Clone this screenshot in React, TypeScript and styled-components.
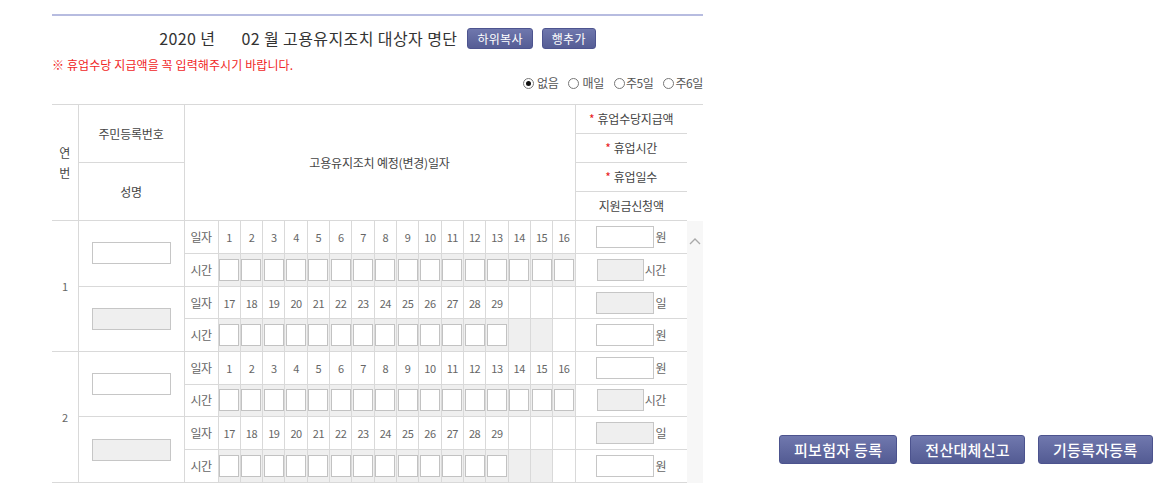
import React from 'react';
import styled, { createGlobalStyle } from 'styled-components';

const GlobalStyle = createGlobalStyle`
  html, body {
    margin: 0;
    padding: 0;
    background: #fff;
  }
  body {
    font-family: "Noto Sans CJK KR", "Noto Sans", sans-serif;
    color: #444;
  }
`;

const LINE = '#d9d9d9';

const Page = styled.div`
  display: flex;
  align-items: flex-end;
  gap: 76px;
  padding: 14px 0 0 52px;
`;

const Panel = styled.div`
  flex: none;
  width: 651px;
  border-top: 2px solid #b7bce0;
`;

const TitleRow = styled.div`
  display: flex;
  justify-content: center;
  align-items: center;
  height: 21px;
  margin-top: 12px;
`;

const TitleText = styled.span<{ $ml?: number }>`
  font-size: 16px;
  line-height: 21px;
  color: #333;
  letter-spacing: 0.4px;
  margin-left: ${({ $ml }) => $ml || 0}px;
`;

const ButtonGroup = styled.div`
  display: flex;
  gap: 9px;
  margin-left: 10px;
`;

const SmallButton = styled.button`
  height: 21px;
  padding: 0 9px;
  font-family: inherit;
  font-size: 12px;
  line-height: 19px;
  color: #fff;
  letter-spacing: 0.3px;
  background: linear-gradient(#6f77ad, #555d95);
  border: 1px solid #4d548f;
  border-radius: 3px;
  cursor: pointer;
`;

const Notice = styled.p`
  margin: 8px 0 0;
  font-size: 12px;
  line-height: 16px;
  letter-spacing: 0.1px;
  color: #f02626;
`;

const RadioRow = styled.div`
  display: flex;
  justify-content: flex-end;
  gap: 10px;
  margin-top: 2px;
  font-size: 12px;
  line-height: 16px;
  color: #555;
  letter-spacing: -0.4px;
`;

const RadioItem = styled.label`
  display: flex;
  align-items: center;
  gap: 1px;
`;

const RadioLabel = styled.span`
  white-space: pre;
`;

const RadioDot = styled.span<{ $checked?: boolean }>`
  position: relative;
  width: 11px;
  height: 11px;
  box-sizing: border-box;
  border: 1px solid #777;
  border-radius: 50%;
  background: #fff;
  &::after {
    content: '';
    display: ${({ $checked }) => ($checked ? 'block' : 'none')};
    position: absolute;
    left: 2px;
    top: 2px;
    width: 5px;
    height: 5px;
    border-radius: 50%;
    background: #111;
  }
`;

const Grid = styled.div`
  margin-top: 13px;
  border-top: 1px solid ${LINE};
`;

const HeadBox = styled.div`
  width: 635px;
  border-bottom: 1px solid ${LINE};
`;

const BodyWrap = styled.div`
  display: flex;
  height: 262px;
  overflow: hidden;
`;

const BodyBox = styled.div`
  width: 635px;
  border-bottom: 1px solid ${LINE};
`;

const ScrollTrack = styled.div`
  width: 16px;
  background: #f7f7f7;
  display: flex;
  justify-content: center;
  align-items: flex-start;
  padding-top: 17px;
  box-sizing: border-box;
`;

const Table = styled.table`
  width: 635px;
  table-layout: fixed;
  border-collapse: collapse;
  border-style: hidden;
`;

const Col = styled.col<{ $w: number }>`
  width: ${({ $w }) => $w}px;
`;

const HeadRow = styled.tr`
  height: 28.75px;
`;

const BodyRow = styled.tr`
  height: 32.625px;
`;

const HeadCell = styled.th`
  border: 1px solid ${LINE};
  padding: 0;
  font-size: 12px;
  line-height: 20px;
  font-weight: normal;
  color: #444;
  letter-spacing: -0.2px;
  text-align: center;
  vertical-align: middle;
`;

const Star = styled.span`
  color: #e82020;
  margin-right: 3px;
`;

const Cell = styled.td<{ $bg?: string; $size?: number; $color?: string }>`
  border: 1px solid ${LINE};
  padding: 0;
  font-size: ${({ $size }) => $size || 12}px;
  line-height: 16px;
  color: ${({ $color }) => $color || '#666'};
  background: ${({ $bg }) => $bg || '#fff'};
  letter-spacing: -0.5px;
  text-align: center;
  vertical-align: middle;
  white-space: nowrap;
`;

const Field = styled.input<{ $w: number; $gray?: boolean }>`
  display: inline-block;
  vertical-align: middle;
  box-sizing: border-box;
  width: ${({ $w }) => $w}px;
  height: 22px;
  margin: 0;
  padding: 0 3px;
  border: 1px solid #c6c6c6;
  background: ${({ $gray }) => ($gray ? '#efefef' : '#fff')};
  font-family: inherit;
  font-size: 12px;
  outline: none;
`;

const TimeField = styled.input`
  display: block;
  box-sizing: border-box;
  width: 20px;
  height: 22px;
  margin: 0 auto;
  padding: 0;
  border: 1px solid #c2c2c2;
  background: #fff;
  outline: none;
`;

const Unit = styled.span`
  display: inline-block;
  vertical-align: middle;
  margin-left: 1px;
  font-size: 12px;
  color: #666;
`;

const ActionBar = styled.div`
  flex: none;
  display: flex;
  gap: 13px;
  margin-bottom: 19px;
`;

const ActionButton = styled.button`
  flex: none;
  height: 29px;
  padding: 0 14px;
  font-family: inherit;
  font-size: 15px;
  font-weight: 500;
  letter-spacing: 0.3px;
  line-height: 27px;
  white-space: nowrap;
  color: #fff;
  background: linear-gradient(#7078ae, #535b93);
  border: 1px solid #4c538e;
  border-radius: 3px;
  cursor: pointer;
`;

const GRAY = '#efefef';
const dayCols = Array.from({ length: 16 }, (_, i) => i);

const ChevronUp = () => (
  <svg width="12" height="7" viewBox="0 0 12 7">
    <polyline points="1,6 6,1 11,6" fill="none" stroke="#a9a9a9" strokeWidth="1.3" />
  </svg>
);

const Block: React.FC<{ no: number }> = ({ no }) => (
  <>
    <BodyRow>
      <Cell rowSpan={4} $size={11}>{no}</Cell>
      <Cell rowSpan={2}><Field $w={79} /></Cell>
      <Cell>일자</Cell>
      {dayCols.map(i => (
        <Cell key={i} $size={11}>{i + 1}</Cell>
      ))}
      <Cell><Field $w={58} /><Unit>원</Unit></Cell>
    </BodyRow>
    <BodyRow>
      <Cell>시간</Cell>
      {dayCols.map(i => (
        <Cell key={i} $bg={GRAY}><TimeField /></Cell>
      ))}
      <Cell><Field $w={47} $gray /><Unit>시간</Unit></Cell>
    </BodyRow>
    <BodyRow>
      <Cell rowSpan={2}><Field $w={79} $gray /></Cell>
      <Cell>일자</Cell>
      {dayCols.map(i => (
        <Cell key={i} $size={11}>{i + 17 <= 29 ? i + 17 : ''}</Cell>
      ))}
      <Cell><Field $w={58} $gray /><Unit>일</Unit></Cell>
    </BodyRow>
    <BodyRow>
      <Cell>시간</Cell>
      {dayCols.map(i => {
        const day = i + 17;
        if (day <= 29) return <Cell key={i} $bg={GRAY}><TimeField /></Cell>;
        return <Cell key={i} $bg={day <= 31 ? GRAY : '#fff'} />;
      })}
      <Cell><Field $w={58} /><Unit>원</Unit></Cell>
    </BodyRow>
  </>
);

const radios = [
  { label: ' 없음', checked: true },
  { label: ' 매일' },
  { label: '주5일' },
  { label: '주6일' },
];

export default function App() {
  return (
    <>
      <GlobalStyle />
      <Page>
        <Panel>
          <TitleRow>
            <TitleText>2020 년</TitleText>
            <TitleText $ml={26}>02 월 고용유지조치 대상자 명단</TitleText>
            <ButtonGroup>
              <SmallButton>하위복사</SmallButton>
              <SmallButton>행추가</SmallButton>
            </ButtonGroup>
          </TitleRow>
          <Notice>※ 휴업수당 지급액을 꼭 입력해주시기 바랍니다.</Notice>
          <RadioRow>
            {radios.map(r => (
              <RadioItem key={r.label}>
                <RadioDot $checked={r.checked} />
                <RadioLabel>{r.label}</RadioLabel>
              </RadioItem>
            ))}
          </RadioRow>
          <Grid>
            <HeadBox>
              <Table>
                <colgroup>
                  <Col $w={26} />
                  <Col $w={106} />
                  <Col $w={391} />
                  <Col $w={112} />
                </colgroup>
                <tbody>
                  <HeadRow>
                    <HeadCell rowSpan={4}>연<br />번</HeadCell>
                    <HeadCell rowSpan={2}>주민등록번호</HeadCell>
                    <HeadCell rowSpan={4}>고용유지조치 예정(변경)일자</HeadCell>
                    <HeadCell><Star>*</Star>휴업수당지급액</HeadCell>
                  </HeadRow>
                  <HeadRow>
                    <HeadCell><Star>*</Star>휴업시간</HeadCell>
                  </HeadRow>
                  <HeadRow>
                    <HeadCell rowSpan={2}>성명</HeadCell>
                    <HeadCell><Star>*</Star>휴업일수</HeadCell>
                  </HeadRow>
                  <HeadRow>
                    <HeadCell>지원금신청액</HeadCell>
                  </HeadRow>
                </tbody>
              </Table>
            </HeadBox>
            <BodyWrap>
              <BodyBox>
                <Table>
                  <colgroup>
                    <Col $w={26} />
                    <Col $w={106} />
                    <Col $w={34} />
                    {dayCols.map(i => (
                      <Col key={i} $w={22.3125} />
                    ))}
                    <Col $w={112} />
                  </colgroup>
                  <tbody>
                    <Block no={1} />
                    <Block no={2} />
                  </tbody>
                </Table>
              </BodyBox>
              <ScrollTrack>
                <ChevronUp />
              </ScrollTrack>
            </BodyWrap>
          </Grid>
        </Panel>
        <ActionBar>
          <ActionButton>피보험자 등록</ActionButton>
          <ActionButton>전산대체신고</ActionButton>
          <ActionButton>기등록자등록</ActionButton>
        </ActionBar>
      </Page>
    </>
  );
}
